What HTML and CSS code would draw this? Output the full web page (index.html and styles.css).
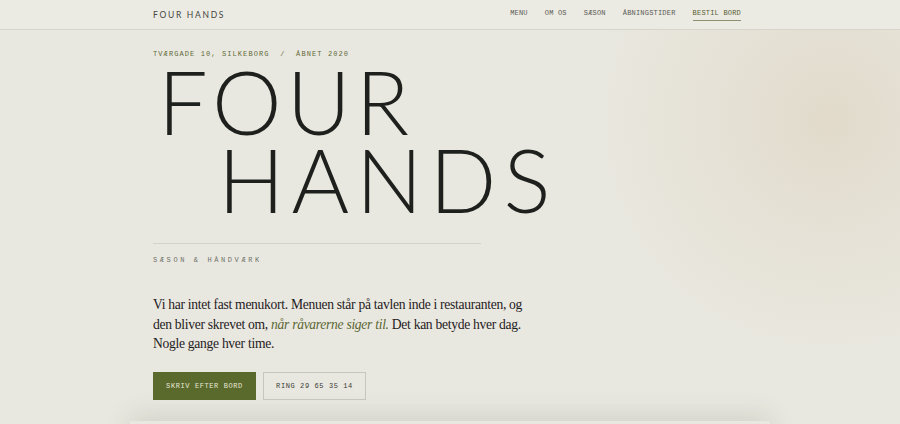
FILE: index.html
```html
<!DOCTYPE html>
<html lang="da">
<head>
    <meta charset="UTF-8">
    <meta name="viewport" content="width=device-width, initial-scale=1.0">
    <title>Four Hands - Silkeborg</title>
    <link rel="stylesheet" href="styles.css">
</head>
<body>
    <header class="site-header">
        <div class="wrap header-inner">
            <div class="logo">FOUR HANDS</div>
            <nav class="main-nav">
                <a href="#">MENU</a>
                <a href="#">OM OS</a>
                <a href="#">SÆSON</a>
                <a href="#">ÅBNINGSTIDER</a>
                <a href="#" class="nav-cta">BESTIL BORD</a>
            </nav>
        </div>
    </header>

    <main class="hero">
        <div class="wrap">
            <p class="meta">TVÆRGADE 10, SILKEBORG &nbsp;/&nbsp; ÅBNET 2020</p>

            <h1 class="title">
                <span class="title-line">FOUR</span>
                <span class="title-line indent">HANDS</span>
            </h1>

            <div class="rule"></div>
            <p class="kicker">SÆSON &amp; HÅNDVÆRK</p>

            <p class="lede">Vi har intet fast menukort. Menuen står på tavlen inde i restauranten, og den bliver skrevet om, <em>når råvarerne siger til.</em> Det kan betyde hver dag. Nogle gange hver time.</p>

            <div class="actions">
                <a href="#" class="btn btn-primary">SKRIV EFTER BORD</a>
                <a href="#" class="btn btn-outline">RING 29 65 35 14</a>
            </div>
        </div>
    </main>

    <section class="board"></section>
</body>
</html>
```

FILE: styles.css
```css
body {
    margin: 0;
    background: #e9e8e0;
    color: #1d1f1c;
    font-family: 'Liberation Serif', serif;
    overflow: hidden;
}

.wrap {
    width: 594px;
    margin: 0 auto;
}

/* header */

.site-header {
    height: 29px;
    background: #ebeae3;
    border-bottom: 1px solid #d6d4cb;
}

.header-inner {
    height: 100%;
    display: flex;
    align-items: center;
    justify-content: space-between;
}

.logo {
    font-family: 'Lato', sans-serif;
    font-weight: 400;
    font-size: 8.5px;
    letter-spacing: 1.7px;
    color: #45463f;
}

.main-nav {
    display: flex;
    gap: 17px;
    margin-right: 6px;
}

.main-nav a {
    font-family: 'Liberation Mono', monospace;
    font-size: 7px;
    letter-spacing: 0.2px;
    color: #5a5b55;
    text-decoration: none;
}

.main-nav .nav-cta {
    color: #56612f;
    padding-bottom: 3px;
    border-bottom: 1px solid #8c9170;
}

/* hero */

.hero {
    height: 391px;
    background: radial-gradient(circle at 830px 90px, rgba(214, 198, 172, 0.4) 0, rgba(214, 198, 172, 0.2) 110px, rgba(214, 198, 172, 0) 250px);
}

.hero .wrap {
    padding-top: 19px;
}

.meta {
    margin: 0;
    font-family: 'Liberation Mono', monospace;
    font-size: 7px;
    line-height: 10px;
    letter-spacing: 1.1px;
    color: #5f6a38;
}

.title {
    margin: 3px 0 0;
    font-family: 'Lato', sans-serif;
    font-weight: 300;
    font-size: 88px;
    line-height: 78px;
    letter-spacing: 5px;
    color: #1d201d;
}

.title-line {
    display: block;
    padding-left: 5px;
}

.title-line.indent {
    padding-left: 65px;
    letter-spacing: 7px;
}

.rule {
    width: 328px;
    height: 1px;
    margin-top: 25px;
    background: #d3d1c8;
}

.kicker {
    margin: 11px 0 0;
    font-family: 'Liberation Mono', monospace;
    font-size: 7px;
    line-height: 10px;
    letter-spacing: 2.6px;
    color: #6f706a;
}

.lede {
    max-width: 380px;
    margin: 30px 0 0;
    font-size: 13.6px;
    line-height: 19.5px;
    letter-spacing: -0.3px;
    color: #1f201d;
}

.lede em {
    color: #5a6632;
}

.actions {
    display: flex;
    gap: 7px;
    margin-top: 18px;
}

.btn {
    display: flex;
    align-items: center;
    justify-content: center;
    width: 103px;
    height: 28px;
    box-sizing: border-box;
    font-family: 'Liberation Mono', monospace;
    font-size: 7px;
    letter-spacing: 0.6px;
    text-decoration: none;
}

.btn-primary {
    background: #5a6a2c;
    color: #e7e6d6;
}

.btn-outline {
    border: 1px solid #c7c5bc;
    color: #3b3c37;
}

/* menu board peeking in at the bottom */

.board {
    width: 640px;
    height: 200px;
    margin: 0 auto;
    background: #e9e8e0;
    box-shadow: 0 -6px 24px rgba(60, 55, 40, 0.12);
}
```
